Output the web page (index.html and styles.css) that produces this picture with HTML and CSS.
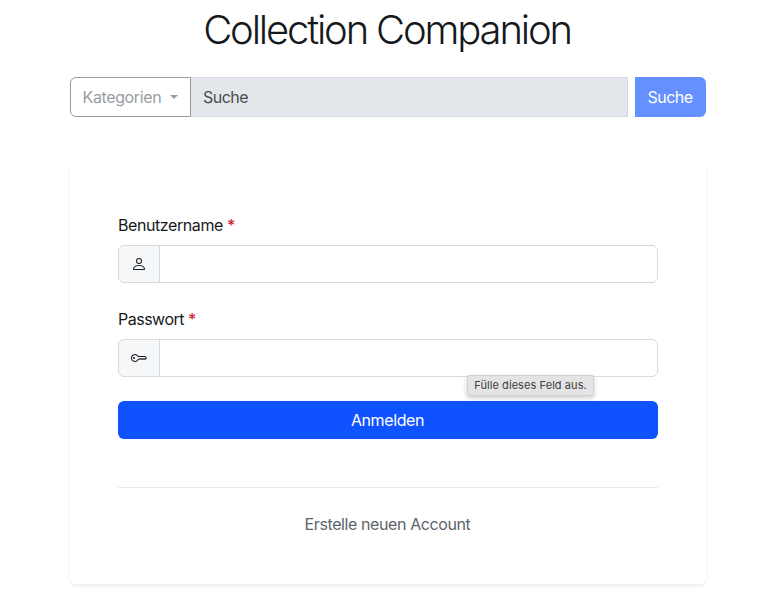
FILE: index.html
```html
<!DOCTYPE html>
<html lang="de">
<head>
<meta charset="utf-8">
<title>Collection Companion</title>
<link rel="stylesheet" href="styles.css">
</head>
<body>
<main class="container">
  <h1 class="title"><span>Collection Companion</span></h1>
  <form class="search">
    <button type="button" class="categories" disabled><span class="t-categories">Kategorien</span><i class="caret"></i></button>
    <div class="search-field"><span class="t-search">Suche</span></div>
    <button type="button" class="search-button" disabled><span class="t-search">Suche</span></button>
  </form>
  <section class="card">
    <label class="label" for="user"><span class="t-user">Benutzername</span><span class="required">*</span></label>
    <div class="group">
      <span class="addon">
        <svg width="16" height="16" viewBox="0 0 16 16" fill="currentColor"><path d="M8 8a3 3 0 1 0 0-6 3 3 0 0 0 0 6m2-3a2 2 0 1 1-4 0 2 2 0 0 1 4 0m4 8c0 1-1 1-1 1H3s-1 0-1-1 1-4 6-4 6 3 6 4m-1-.004c-.001-.246-.154-.986-.832-1.664C11.516 10.68 10.289 10 8 10s-3.516.68-4.168 1.332c-.678.678-.83 1.418-.832 1.664z"/></svg>
      </span>
      <input class="input" id="user" type="text">
    </div>
    <label class="label" for="pass"><span class="t-pass">Passwort</span><span class="required">*</span></label>
    <div class="group">
      <span class="addon">
        <svg width="16" height="16" viewBox="0 0 16 16" fill="currentColor"><path d="M0 8a4 4 0 0 1 7.465-2H14a.5.5 0 0 1 .354.146l1.5 1.5a.5.5 0 0 1 0 .708l-1.5 1.5a.5.5 0 0 1-.708 0L13 9.207l-.646.647a.5.5 0 0 1-.708 0L11 9.207l-.646.647a.5.5 0 0 1-.708 0L9 9.207l-.646.647A.5.5 0 0 1 8 10h-.535A4 4 0 0 1 0 8m4-3a3 3 0 1 0 2.712 4.285A.5.5 0 0 1 7.163 9h.63l.853-.854a.5.5 0 0 1 .708 0l.646.647.646-.647a.5.5 0 0 1 .708 0l.646.647.646-.647a.5.5 0 0 1 .708 0l.646.647.793-.793-1-1h-6.63a.5.5 0 0 1-.451-.285A3 3 0 0 0 4 5"/><path d="M4 8a1 1 0 1 1-2 0 1 1 0 0 1 2 0"/></svg>
      </span>
      <input class="input" id="pass" type="password">
      <div class="tooltip">Fülle dieses Feld aus.</div>
    </div>
    <button type="button" class="login"><span class="t-login">Anmelden</span></button>
    <div class="footer"><a class="register">Erstelle neuen Account</a></div>
  </section>
</main>
</body>
</html>
```
FILE: styles.css
```css
* { box-sizing: border-box; }

body {
  margin: 0;
  min-height: 608px;
  background: #fff;
  color: #16191c;
  font: 430 16px/24px Inter, "Liberation Sans", sans-serif;
}

.container { width: 636px; margin-left: 70px; }

.title {
  margin: 0;
  padding: 6px 2px 0 0;
  text-align: center;
  font-size: 40px;
  line-height: 48px;
  font-weight: 340;
  letter-spacing: -2.17px;
  white-space: nowrap;
}

button { font: inherit; white-space: nowrap; }

.search { display: flex; height: 40px; margin-top: 23px; }

.categories {
  display: flex;
  align-items: center;
  width: 121px;
  padding: 0 12px 0 11.5px;
  border: 1px solid #969ba0;
  border-radius: 6px 0 0 6px;
  background: #fff;
  color: #989da2;
}

.caret {
  margin-left: auto;
  border-top: 4.8px solid;
  border-left: 4.8px solid transparent;
  border-right: 4.8px solid transparent;
}

.search-field {
  flex: 1;
  padding: 7px 12px;
  border: 1px solid #d5dade;
  border-left: 0;
  background: #e3e6ea;
  color: #4a4d50;
}

.search-button {
  width: 71px;
  margin-left: 7px;
  padding: 0 1px 0 0;
  border: 0;
  border-radius: 0 6px 6px 0;
  background: #6590ff;
  color: #fff;
}

.card {
  height: 419px;
  margin-top: 48px;
  padding: 48px;
  border-radius: 6px;
  background: #fff;
  box-shadow: 0 2px 4px rgba(0, 0, 0, .075);
}

.label { display: block; margin-bottom: 8px; }
.required { margin-left: 4px; color: #d01f35; font-weight: 500; }

.group { position: relative; display: flex; height: 38px; margin-bottom: 24px; }

.addon {
  display: flex;
  align-items: center;
  justify-content: center;
  width: 42px;
  border: 1px solid #d5dade;
  border-radius: 6px 0 0 6px;
  background: #f6f7f9;
}

.input {
  flex: 1;
  min-width: 0;
  margin-left: -1px;
  border: 1px solid #d5dade;
  border-radius: 0 6px 6px 0;
  background: #fff;
  outline: 0;
}

.tooltip {
  position: absolute;
  top: 36px;
  left: 349px;
  width: 127px;
  height: 21px;
  border: 1px solid #d2d2d2;
  border-radius: 2px;
  background: #e4e4e4;
  box-shadow: 0 2px 5px rgba(0, 0, 0, .2);
  color: #404040;
  font-size: 11px;
  line-height: 18px;
  letter-spacing: 0.07px;
  text-align: center;
  white-space: nowrap;
}

.login {
  display: block;
  width: 100%;
  height: 38px;
  padding: 0 1px 0 0;
  border: 0;
  border-radius: 6px;
  background: #0f52ff;
  color: #fff;
}

.footer {
  margin-top: 48px;
  padding: 24px 1px 0 0;
  border-top: 1px solid #e8e9ea;
  text-align: center;
}

.register { color: #5c646b; letter-spacing: -0.4px; }
.t-categories { letter-spacing: -0.37px; }
.t-search { letter-spacing: -0.5px; }
.t-user { letter-spacing: -0.42px; }
.t-pass { letter-spacing: -0.5px; }
.t-login { letter-spacing: -0.38px; }
```
